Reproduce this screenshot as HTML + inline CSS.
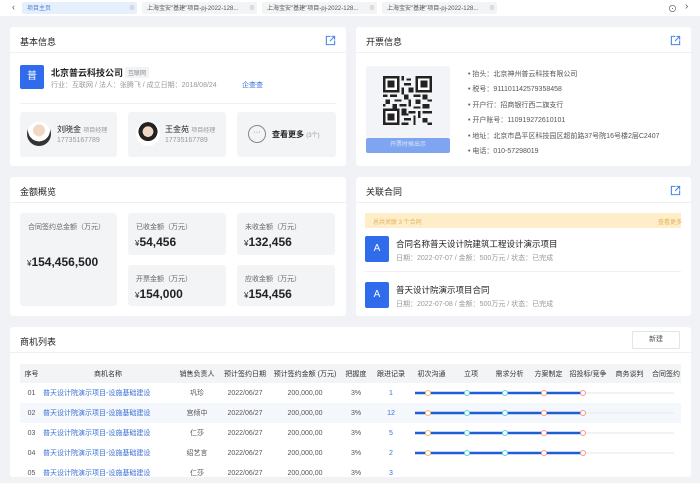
<!DOCTYPE html>
<html><head><meta charset="utf-8"><style>
*{margin:0;padding:0;box-sizing:border-box}
body{width:700px;height:470px;overflow:hidden;background:#f0f2f5;font-family:"Liberation Sans","Noto Sans CJK SC",sans-serif;color:#333;position:relative;font-size:9px}
.a{position:absolute;white-space:nowrap}
.card{position:absolute;background:#fff;border-radius:3px}
.hd{position:absolute;left:0;right:0;top:0;height:26px;border-bottom:1px solid #eef0f3}
.tt{position:absolute;left:10px;top:8px;font-size:9px;color:#222}
.ed{position:absolute;right:10px;top:8px;width:11px;height:11px}
.g{color:#999;font-size:8px}
.box{position:absolute;background:#f3f4f6;border-radius:3px}
.lbl{position:absolute;left:8px;top:9px;font-size:7px;color:#666}
.num{position:absolute;left:7px;font-size:12px;font-weight:bold;color:#222}
.num small{font-size:8px;font-weight:normal}
th{font-weight:normal;color:#333;font-size:7px;height:19px;white-space:nowrap;overflow:hidden}
td{height:20px;font-size:7px;color:#555;text-align:center;white-space:nowrap;overflow:hidden}
table{border-collapse:collapse;position:absolute;left:20px;top:364px;width:661px;table-layout:fixed}
thead tr{background:#f3f4f6}
tr.s{background:#f4f7fc}
.lk{color:#3a6fd8;text-align:left}
</style></head><body>
<div class="a" style="left:0;top:0;width:700px;height:16px;background:#fff"></div>
<div class="a" style="left:12px;top:2px;font-size:9px;color:#555">‹</div>
<div class="a" style="left:22px;top:2px;width:115px;height:12px;background:#e6effc;border-radius:2px"></div>
<div class="a" style="left:27px;top:3px;font-size:6px;color:#4a7fd8">项目主页</div>
<div class="a" style="left:129px;top:3px;font-size:6px;color:#bbb">⊗</div>
<div class="a" style="left:142px;top:2px;width:115px;height:12px;background:#f3f4f6;border-radius:2px"></div>
<div class="a" style="left:147px;top:3px;font-size:6px;color:#555">上海宝安"基建"项目-pj-2022-128...</div>
<div class="a" style="left:249px;top:3px;font-size:6px;color:#bbb">⊗</div>
<div class="a" style="left:262px;top:2px;width:115px;height:12px;background:#f3f4f6;border-radius:2px"></div>
<div class="a" style="left:267px;top:3px;font-size:6px;color:#555">上海宝安"基建"项目-pj-2022-128...</div>
<div class="a" style="left:369px;top:3px;font-size:6px;color:#bbb">⊗</div>
<div class="a" style="left:382px;top:2px;width:115px;height:12px;background:#f3f4f6;border-radius:2px"></div>
<div class="a" style="left:387px;top:3px;font-size:6px;color:#555">上海宝安"基建"项目-pj-2022-128...</div>
<div class="a" style="left:489px;top:3px;font-size:6px;color:#bbb">⊗</div>
<div class="a" style="left:668px;top:2px;font-size:9px;color:#555">⊙</div>
<div class="a" style="left:685px;top:1px;font-size:10px;color:#555">›</div>

<svg width="0" height="0" style="position:absolute"><defs><symbol id="ed" viewBox="0 0 12 12"><path d="M6 1.5H1.5v9h9V6M7 1.5h3.5V5M10.5 1.5L5.5 6.5" fill="none" stroke="#4a86e8" stroke-width="1.2"/></symbol></defs></svg>

<div class="card" style="left:10px;top:27px;width:336px;height:139px">
 <div class="hd"></div><div class="tt">基本信息</div><svg class="ed"><use href="#ed"/></svg>
 <div class="a" style="left:10px;top:38px;width:24px;height:24px;background:#2f6bea;border-radius:2px;color:#fff;font-size:10px;text-align:center;line-height:24px">普</div>
 <div class="a" style="left:41px;top:39px;font-size:9px;font-weight:bold;color:#222">北京普云科技公司</div>
 <div class="a" style="left:115px;top:40px;padding:1px 3px;background:#f2f3f5;font-size:6px;color:#888">互联网</div>
 <div class="a g" style="left:41px;top:53px;font-size:7px">行业：互联网 / 法人：张腾飞 / 成立日期：2018/08/24</div>
 <div class="a" style="left:232px;top:53px;font-size:7px;color:#3a6fd8">企查查</div>
 <div class="a" style="left:10px;top:76px;width:316px;height:1px;background:#eef0f3"></div>
 <div class="box" style="left:10px;top:85px;width:97px;height:45px"></div>
 <div class="a" style="left:17px;top:95px;width:24px;height:24px;border-radius:50%;background:radial-gradient(circle at 50% 35%,#f2d8c4 0 30%,#fff 31% 55%,#333 56%)"></div>
 <div class="a" style="left:47px;top:97px;font-size:8px;color:#222">刘晓金 <span class="g" style="font-size:6px">项目经理</span></div>
 <div class="a g" style="left:47px;top:110px;font-size:7px">17735167789</div>
 <div class="box" style="left:118px;top:85px;width:98px;height:45px"></div>
 <div class="a" style="left:126px;top:95px;width:24px;height:24px;border-radius:50%;background:radial-gradient(circle at 50% 40%,#f2d8c4 0 28%,#222 29% 50%,#fff 51%)"></div>
 <div class="a" style="left:155px;top:97px;font-size:8px;color:#222">王金苑 <span class="g" style="font-size:6px">项目经理</span></div>
 <div class="a g" style="left:155px;top:110px;font-size:7px">17735167789</div>
 <div class="box" style="left:227px;top:85px;width:99px;height:45px"></div>
 <div class="a" style="left:238px;top:98px;width:18px;height:18px;border:1px solid #888;border-radius:50%;font-size:7px;color:#666;text-align:center;line-height:14px">···</div>
 <div class="a" style="left:262px;top:102px;font-size:8px;font-weight:bold;color:#222">查看更多 <span class="g" style="font-size:6px;font-weight:normal">(3个)</span></div>
</div>

<div class="card" style="left:356px;top:27px;width:335px;height:139px">
 <div class="hd"></div><div class="tt">开票信息</div><svg class="ed"><use href="#ed"/></svg>
 <div class="a" style="left:10px;top:39px;width:84px;height:72px;background:#f2f4f8;border-radius:3px"></div>
 <svg class="a" style="left:27px;top:49px" width="49" height="49" viewBox="0 0 21 21" shape-rendering="crispEdges">
  <g fill="#222"><path d="M0 0h7v7H0zM14 0h7v7h-7zM0 14h7v7H0z"/></g>
  <g fill="#fff"><path d="M1 1h5v5H1zM15 1h5v5h-5zM1 15h5v5H1z"/></g>
  <g fill="#222"><path d="M2 2h3v3H2zM16 2h3v3h-3zM2 16h3v3H2z"/>
  <path d="M8 0h1v2H8zM10 1h2v1h-2zM9 3h3v1H9zM8 5h1v3H8zM11 5h2v2h-2zM0 8h2v1H0zM3 8h3v1H3zM9 8h2v2H9zM13 8h3v1h-3zM17 8h2v2h-2zM1 10h2v2H1zM5 10h3v1H5zM11 10h1v3h-1zM14 10h2v2h-2zM19 10h2v1h-2zM0 12h1v1H0zM4 12h2v2H4zM7 12h3v1H7zM13 13h3v1h-3zM17 12h3v2h-3zM8 14h2v3H8zM11 15h3v1h-3zM15 15h1v3h-1zM17 15h4v1h-4zM9 18h3v1H9zM13 17h1v4h-1zM17 18h2v2h-2zM8 20h3v1H8zM19 20h2v1h-2zM10 16h1v1h-1z"/></g>
 </svg>
 <div class="a" style="left:10px;top:111px;width:84px;height:15px;background:#7fa5f0;border-radius:2px;color:#dde8fc;font-size:6px;text-align:center;line-height:15px">开票时候出示</div>
 <div class="a" style="left:112px;top:40px;font-size:7px;color:#555;line-height:15.4px">
  <div>• 抬头：北京神州普云科技有限公司</div>
  <div>• 税号：911101142579358458</div>
  <div>• 开户行：招商银行西二旗支行</div>
  <div>• 开户账号：110919272610101</div>
  <div>• 地址：北京市昌平区科技园区超前路37号院16号楼2层C2407</div>
  <div>• 电话：010-57298019</div>
 </div>
</div>

<div class="card" style="left:10px;top:177px;width:336px;height:139px">
 <div class="hd"></div><div class="tt">金额概览</div>
 <div class="box" style="left:10px;top:36px;width:97px;height:93px"><div class="lbl">合同签约总金额（万元）</div><div class="num" style="top:42px"><small>¥</small>154,456,500</div></div>
 <div class="box" style="left:118px;top:36px;width:98px;height:42px"><div class="lbl">已收金额（万元）</div><div class="num" style="top:22px"><small>¥</small>54,456</div></div>
 <div class="box" style="left:227px;top:36px;width:98px;height:42px"><div class="lbl">未收金额（万元）</div><div class="num" style="top:22px"><small>¥</small>132,456</div></div>
 <div class="box" style="left:118px;top:88px;width:98px;height:41px"><div class="lbl">开票金额（万元）</div><div class="num" style="top:22px"><small>¥</small>154,000</div></div>
 <div class="box" style="left:227px;top:88px;width:98px;height:41px"><div class="lbl">应收金额（万元）</div><div class="num" style="top:22px"><small>¥</small>154,456</div></div>
</div>

<div class="card" style="left:356px;top:177px;width:335px;height:139px">
 <div class="hd"></div><div class="tt">关联合同</div><svg class="ed"><use href="#ed"/></svg>
 <div class="a" style="left:9px;top:36px;width:316px;height:15px;background:#fdedc8"></div>
 <div class="a" style="left:17px;top:40px;font-size:6px;color:#e5b25a">总共关联 3 个合同</div>
 <div class="a" style="left:302px;top:40px;font-size:6px;color:#e5b25a">查看更多</div>
 <div class="a" style="left:9px;top:59px;width:24px;height:26px;background:#2f6bea;border-radius:2px;color:#fff;font-size:10px;text-align:center;line-height:26px">A</div>
 <div class="a" style="left:40px;top:61px;font-size:8.5px;color:#222">合同名称普天设计院建筑工程设计演示项目</div>
 <div class="a g" style="left:40px;top:76px;font-size:7px">日期：2022-07-07 / 金额：500万元 / 状态：已完成</div>
 <div class="a" style="left:9px;top:94px;width:316px;height:1px;background:#eef0f3"></div>
 <div class="a" style="left:9px;top:105px;width:24px;height:26px;background:#2f6bea;border-radius:2px;color:#fff;font-size:10px;text-align:center;line-height:26px">A</div>
 <div class="a" style="left:40px;top:107px;font-size:8.5px;color:#222">普天设计院演示项目合同</div>
 <div class="a g" style="left:40px;top:122px;font-size:7px">日期：2022-07-08 / 金额：500万元 / 状态：已完成</div>
</div>

<div class="card" style="left:10px;top:327px;width:681px;height:150px">
 <div class="hd"></div><div class="tt" style="top:8px">商机列表</div>
 <div class="a" style="left:622px;top:4px;width:48px;height:18px;border:1px solid #e3e5e8;border-radius:2px;font-size:7px;color:#555;text-align:center;line-height:16px">新建</div>
</div>
<table>
<colgroup><col style="width:23px"><col style="width:130px"><col style="width:48px"><col style="width:48px"><col style="width:72px"><col style="width:30px"><col style="width:40px"><col style="width:41px"><col style="width:38px"><col style="width:39px"><col style="width:39px"><col style="width:40px"><col style="width:43px"><col></colgroup>
<thead><tr><th>序号</th><th>商机名称</th><th>销售负责人</th><th>预计签约日期</th><th>预计签约金额 (万元)</th><th>把握度</th><th>跟进记录</th><th>初次沟通</th><th>立项</th><th>需求分析</th><th>方案制定</th><th>招投标/竞争</th><th>商务谈判</th><th>合同签约</th></tr></thead>
<tbody>
<tr><td>01</td><td class="lk">普天设计院演示项目-设施基础建设</td><td>巩珍</td><td>2022/06/27</td><td>200,000,00</td><td>3%</td><td style="color:#3a6fd8">1</td><td colspan="7"></td></tr>
<tr class="s"><td>02</td><td class="lk">普天设计院演示项目-设施基础建设</td><td>宫倾中</td><td>2022/06/27</td><td>200,000,00</td><td>3%</td><td style="color:#3a6fd8">12</td><td colspan="7"></td></tr>
<tr><td>03</td><td class="lk">普天设计院演示项目-设施基础建设</td><td>仁莎</td><td>2022/06/27</td><td>200,000,00</td><td>3%</td><td style="color:#3a6fd8">5</td><td colspan="7"></td></tr>
<tr><td>04</td><td class="lk">普天设计院演示项目-设施基础建设</td><td>绍艺言</td><td>2022/06/27</td><td>200,000,00</td><td>3%</td><td style="color:#3a6fd8">2</td><td colspan="7"></td></tr>
<tr><td>05</td><td class="lk">普天设计院演示项目-设施基础建设</td><td>仁莎</td><td>2022/06/27</td><td>200,000,00</td><td>3%</td><td style="color:#3a6fd8">3</td><td colspan="7"></td></tr>
</tbody></table>
<svg class="a" style="left:0;top:0" width="700" height="470">
<defs><g id="pr">
<line x1="584" y1="0" x2="674" y2="0" stroke="#eceef1" stroke-width="1.5"/>
<line x1="415" y1="0" x2="583" y2="0" stroke="#1f5fd6" stroke-width="2.5"/>
<circle cx="428" cy="0" r="2.5" fill="#fff" stroke="#f0b860"/>
<circle cx="467" cy="0" r="2.5" fill="#fff" stroke="#5fd0d8"/>
<circle cx="505" cy="0" r="2.5" fill="#fff" stroke="#5fd0d8"/>
<circle cx="544" cy="0" r="2.5" fill="#fff" stroke="#f09a90"/>
<circle cx="583" cy="0" r="2.5" fill="#fff" stroke="#f09a90"/>
</g></defs>
<use href="#pr" y="393"/><use href="#pr" y="413"/><use href="#pr" y="433"/><use href="#pr" y="453"/><use href="#pr" y="473"/>
</svg>
</body></html>
